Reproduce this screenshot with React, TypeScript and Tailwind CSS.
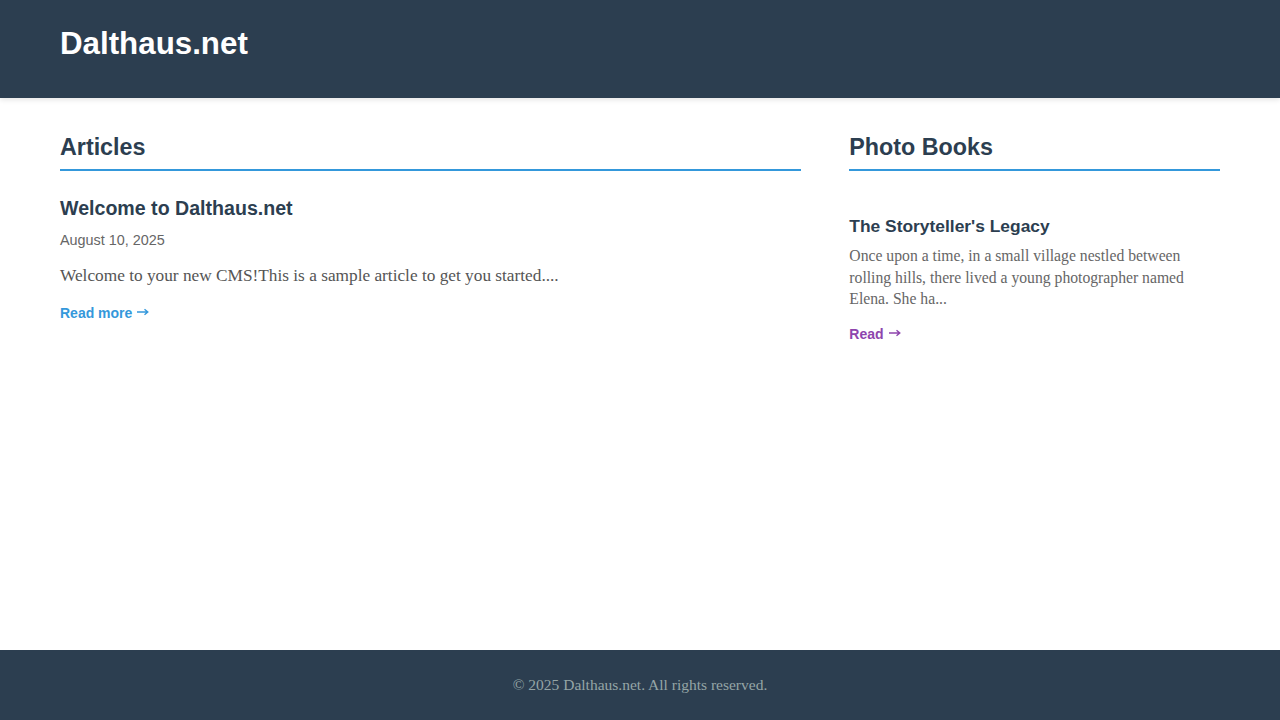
import React from "react"

const articles = [
  {
    id: 1,
    title: "Welcome to Dalthaus.net",
    date: "August 10, 2025",
    excerpt: "Welcome to your new CMS!This is a sample article to get you started....",
  },
]

const books = [
  {
    id: 1,
    title: "The Storyteller's Legacy",
    excerpt:
      "Once upon a time, in a small village nestled between rolling hills, there lived a young photographer named Elena. She ha...",
  },
]

const sans = "font-['Liberation_Sans',Arial,sans-serif]"
const serif = "font-['Liberation_Serif',Georgia,serif]"

const Arrow = () => (
  <svg width="12" height="8" viewBox="0 0 12 8" className="inline-block ml-[5px] -mt-[2px]" fill="none" stroke="currentColor" strokeWidth="1.4">
    <path d="M0 4h10.5M7.5 1.2 10.8 4 7.5 6.8" />
  </svg>
)

export default function App() {
  return (
    <div className={`min-h-screen flex flex-col bg-white ${sans}`}>
      <header className="bg-[#2c3e50] h-[98px] shadow-[0_2px_5px_rgba(0,0,0,0.1)] relative z-10">
        <div className="px-[60px] pt-[24px]">
          <h1 className="text-[31.3px] font-bold text-white leading-[40px]">Dalthaus.net</h1>
        </div>
      </header>

      <main className="flex-1 px-[60px] pt-[33px]">
        <div className="grid grid-cols-[2fr_1fr] gap-12">
          <section>
            <h2 className="text-[23.3px] font-bold text-[#2c3e50] leading-[32px] pb-[6px] border-b-2 border-[#3498db]">
              Articles
            </h2>
            {articles.map((a) => (
              <article key={a.id} className="pt-[24px]">
                <h3 className="text-[19.6px] font-bold text-[#2c3e50] leading-[26px]">{a.title}</h3>
                <div className="text-[14.4px] text-[#666] mt-[9px] leading-[20px]">{a.date}</div>
                <p className={`${serif} text-[17.3px] text-[#555] mt-[14px] leading-[24px]`}>{a.excerpt}</p>
                <a href="#" className="inline-flex items-center text-[14px] font-bold text-[#3498db] mt-[15px] leading-[20px]">
                  Read more <Arrow />
                </a>
              </article>
            ))}
          </section>

          <aside>
            <h2 className="text-[23.3px] font-bold text-[#2c3e50] leading-[32px] pb-[6px] border-b-2 border-[#3498db]">
              Photo Books
            </h2>
            {books.map((b) => (
              <div key={b.id} className="pt-[44px]">
                <h3 className="text-[17.4px] font-bold text-[#2c3e50] leading-[22px]">{b.title}</h3>
                <p className={`${serif} text-[15.7px] text-[#666] mt-[8px] leading-[21.5px]`}>{b.excerpt}</p>
                <a href="#" className="inline-flex items-center text-[14px] font-bold text-[#8e44ad] mt-[14px] leading-[20px]">
                  Read <Arrow />
                </a>
              </div>
            ))}
          </aside>
        </div>
      </main>

      <footer className="bg-[#2c3e50] h-[70px] flex items-center justify-center">
        <p className={`${serif} text-[15.5px] text-[#95a5a6]`}>© 2025 Dalthaus.net. All rights reserved.</p>
      </footer>
    </div>
  )
}
